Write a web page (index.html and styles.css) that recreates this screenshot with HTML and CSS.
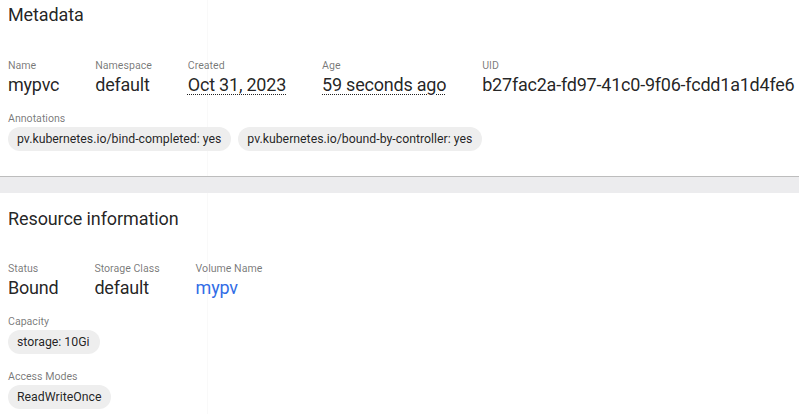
FILE: index.html
```html
<!DOCTYPE html>
<html>
<head>
<meta charset="utf-8">
<link rel="stylesheet" href="styles.css">
</head>
<body>
<section class="card card-first">
  <h2 class="title">Metadata</h2>
  <div class="props">
    <div class="prop"><div class="label">Name</div><div class="value">mypvc</div></div>
    <div class="prop"><div class="label">Namespace</div><div class="value">default</div></div>
    <div class="prop"><div class="label">Created</div><div class="value dotted">Oct 31, 2023</div></div>
    <div class="prop"><div class="label">Age</div><div class="value dotted">59 seconds ago</div></div>
    <div class="prop"><div class="label">UID</div><div class="value">b27fac2a-fd97-41c0-9f06-fcdd1a1d4fe6</div></div>
  </div>
  <div class="group">
    <div class="label">Annotations</div>
    <div class="chips">
      <span class="chip">pv.kubernetes.io/bind-completed: yes</span>
      <span class="chip">pv.kubernetes.io/bound-by-controller: yes</span>
    </div>
  </div>
</section>
<div class="band"></div>
<section class="card card-second">
  <h2 class="title">Resource information</h2>
  <div class="props">
    <div class="prop"><div class="label">Status</div><div class="value">Bound</div></div>
    <div class="prop"><div class="label">Storage Class</div><div class="value">default</div></div>
    <div class="prop"><div class="label">Volume Name</div><div class="value"><a class="link" href="#">mypv</a></div></div>
  </div>
  <div class="group">
    <div class="label">Capacity</div>
    <div class="chips"><span class="chip">storage: 10Gi</span></div>
  </div>
  <div class="group group-tight">
    <div class="label">Access Modes</div>
    <div class="chips"><span class="chip">ReadWriteOnce</span></div>
  </div>
</section>
</body>
</html>
```

FILE: styles.css
```css
html, body {
  margin: 0;
  padding: 0;
  background: #ffffff;
}
body {
  font-family: Roboto, "Liberation Sans", sans-serif;
  color: rgba(0, 0, 0, 0.87);
  width: 799px;
  height: 414px;
  overflow: hidden;
  background-image: linear-gradient(to right, transparent 207px, rgba(0,0,0,0.025) 207px, rgba(0,0,0,0.025) 208px, transparent 208px);
}
.card {
  padding: 0 8px;
}
.card-first {
  padding-bottom: 25px;
}
.card-second {
  padding-top: 11px;
}
.title {
  margin: 0;
  font-size: 18px;
  font-weight: 400;
  line-height: 30px;
  letter-spacing: -0.1px;
  color: rgba(0, 0, 0, 0.87);
}
.props {
  display: flex;
  gap: 36px;
  margin-top: 29px;
}
.card-second .props {
  margin-top: 28px;
}
.prop {
  display: flex;
  flex-direction: column;
}
.label {
  font-size: 10.6px;
  line-height: 14px;
  color: rgba(0, 0, 0, 0.54);
}
.value {
  font-size: 18px;
  line-height: 24px;
  letter-spacing: -0.22px;
  color: rgba(0, 0, 0, 0.87);
  white-space: nowrap;
}
.dotted {
  text-decoration: underline dotted rgba(0, 0, 0, 0.87);
  text-underline-offset: 3px;
  text-decoration-thickness: 1px;
}
.link {
  color: #326de6;
  text-decoration: none;
}
.group {
  margin-top: 15px;
}
.group-tight {
  margin-top: 16px;
}
.chips {
  display: flex;
  gap: 7px;
  margin-top: 1px;
}
.chip {
  display: inline-flex;
  align-items: center;
  height: 24px;
  padding: 0 10px 0 9px;
  border-radius: 12px;
  background: #eeeeee;
  font-size: 12.3px;
  color: rgba(0, 0, 0, 0.87);
  white-space: nowrap;
}
.band {
  height: 16px;
  border-top: 1px solid #bdbdbd;
  background: #ececee;
}
```
